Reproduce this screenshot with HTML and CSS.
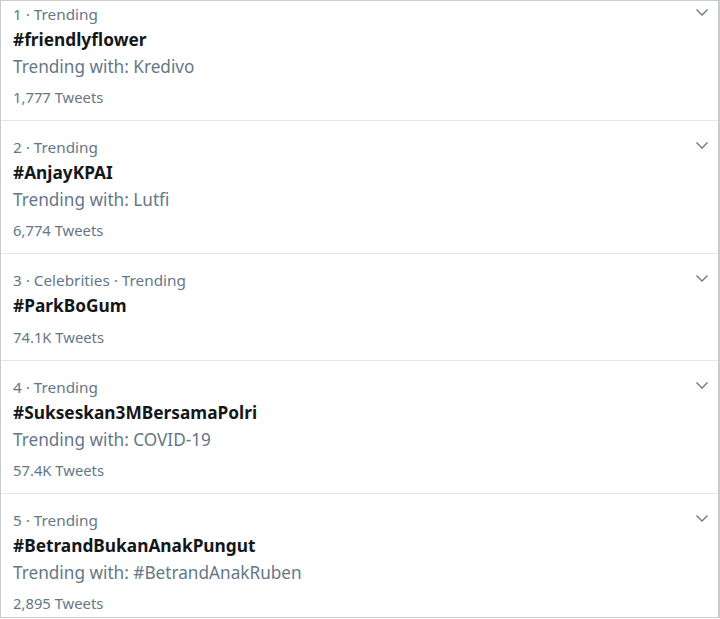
FILE: index.html
```html
<!DOCTYPE html>
<html>
<head>
<meta charset="utf-8">
<link rel="stylesheet" href="styles.css">
</head>
<body>
<div class="panel">
  <div class="list">
    <div class="trend">
      <div class="meta">1 · Trending</div>
      <div class="tag">#friendlyflower</div>
      <div class="with">Trending with: Kredivo</div>
      <div class="count">1,777 Tweets</div>
      <svg class="chev" viewBox="0 0 12 7" width="12" height="7"><path d="M0.5 0.5 L6 6 L11.5 0.5" fill="none" stroke="#657786" stroke-width="1.3"/></svg>
    </div>
    <div class="trend">
      <div class="meta">2 · Trending</div>
      <div class="tag">#AnjayKPAI</div>
      <div class="with">Trending with: Lutfi</div>
      <div class="count">6,774 Tweets</div>
      <svg class="chev" viewBox="0 0 12 7" width="12" height="7"><path d="M0.5 0.5 L6 6 L11.5 0.5" fill="none" stroke="#657786" stroke-width="1.3"/></svg>
    </div>
    <div class="trend">
      <div class="meta">3 · Celebrities · Trending</div>
      <div class="tag">#ParkBoGum</div>
      <div class="count count-solo">74.1K Tweets</div>
      <svg class="chev" viewBox="0 0 12 7" width="12" height="7"><path d="M0.5 0.5 L6 6 L11.5 0.5" fill="none" stroke="#657786" stroke-width="1.3"/></svg>
    </div>
    <div class="trend">
      <div class="meta">4 · Trending</div>
      <div class="tag">#Sukseskan3MBersamaPolri</div>
      <div class="with">Trending with: COVID-19</div>
      <div class="count">57.4K Tweets</div>
      <svg class="chev" viewBox="0 0 12 7" width="12" height="7"><path d="M0.5 0.5 L6 6 L11.5 0.5" fill="none" stroke="#657786" stroke-width="1.3"/></svg>
    </div>
    <div class="trend">
      <div class="meta">5 · Trending</div>
      <div class="tag">#BetrandBukanAnakPungut</div>
      <div class="with">Trending with: #BetrandAnakRuben</div>
      <div class="count">2,895 Tweets</div>
      <svg class="chev" viewBox="0 0 12 7" width="12" height="7"><path d="M0.5 0.5 L6 6 L11.5 0.5" fill="none" stroke="#657786" stroke-width="1.3"/></svg>
    </div>
  </div>
</div>
</body>
</html>
```
FILE: styles.css
```css
html, body {
  margin: 0;
  padding: 0;
  background: #fff;
}
body {
  font-family: "Noto Sans", "Open Sans", sans-serif;
  width: 720px;
  height: 619px;
  overflow: hidden;
}
.panel {
  width: 720px;
  height: 618px;
  box-sizing: border-box;
  border: 1px solid #c9ccce;
  border-right-width: 2px;
  overflow: hidden;
}
.list {
  margin-top: -13px;
}
.trend {
  position: relative;
  padding: 13px 12px 10px 12px;
  border-bottom: 1px solid #e1e8ed;
}
.meta {
  font-size: 15.3px;
  line-height: 26px;
  color: #657786;
}
.tag {
  font-size: 17.3px;
  line-height: 26px;
  font-weight: 700;
  color: #14171a;
}
.with {
  font-size: 17.2px;
  line-height: 27px;
  color: #657786;
}
.count {
  margin-top: 4px;
  font-size: 14.8px;
  line-height: 26px;
  color: #657786;
}
.count-solo {
  margin-top: 5px;
}
.chev {
  position: absolute;
  right: 10px;
  top: 21px;
}
```
